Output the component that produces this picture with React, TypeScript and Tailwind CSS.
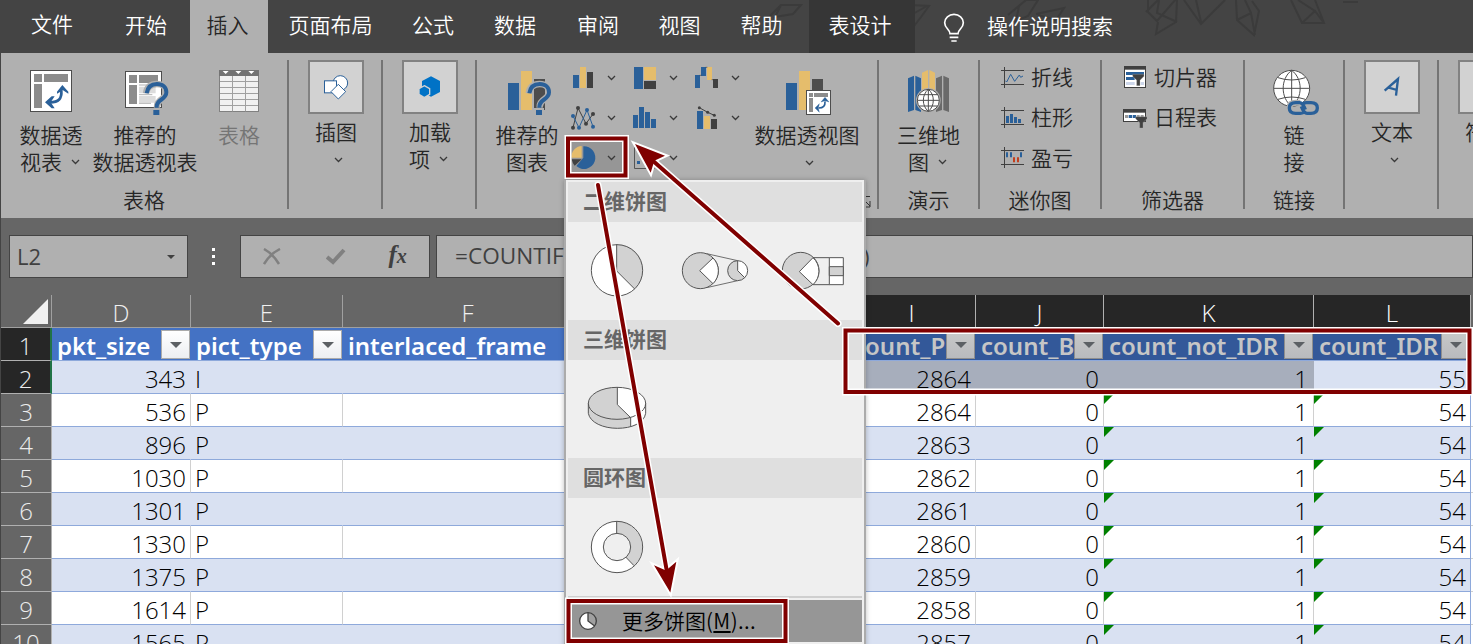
import type { ReactNode } from "react";

const BLUE = "#2a6099";
const GOLD = "#e5bd6c";
const DARK = "#4d4d4d";

function Icon({ box, children, className = "" }: { box: [number, number, number, number]; children: ReactNode; className?: string }) {
  return (
    <svg
      viewBox={box.join(" ")}
      width={box[2] / 3}
      height={box[3] / 3}
      className={`block shrink-0 overflow-visible ${className}`}
      fill="none"
    >
      {children}
    </svg>
  );
}

function Chevron({ className = "" }: { className?: string }) {
  return (
    <svg viewBox="0 0 9 6" width="9" height="6" fill="none" className={`block shrink-0 ${className}`}>
      <path d="M1 1l3.5 3.5L8 1" stroke="#3a3a3a" strokeWidth="1.3" />
    </svg>
  );
}

/* ---------- large ribbon icons ---------- */

const PivotIcon = () => (
  <Icon box={[90, 210, 126, 126]}>
    <rect x="91.5" y="211.5" width="123" height="123" fill="#fff" stroke={DARK} strokeWidth="3" />
    <path d="M102 222h24v24h-24zM132 222h72v24h-72zM102 252h24v72h-24z" fill="#8c8c8c" />
    <path d="M184 272C186 296 176 307 150 307" stroke={BLUE} strokeWidth="8" />
    <path d="M187 255l18 20v6l-16-10-18 10v-6zM135 307l20-18h9l-12 18 12 18h-9z" fill={BLUE} />
  </Icon>
);

const QuestionMark = () => (
  <>
    <path d="M441 280C444 259 458 252 474 252C491 252 502 262 502 277C502 300 474 294 474 320V323" stroke="#b0b0b0" strokeWidth="19" />
    <path d="M443 280C446 259 458 252 474 252C491 252 502 262 502 277C502 300 473 297 473 320V323" stroke={BLUE} strokeWidth="12" />
    <rect x="463" y="330" width="18" height="15" fill={BLUE} />
  </>
);

const RecommendedPivotIcon = () => (
  <Icon box={[378, 213, 130, 132]}>
    <rect x="379.500" y="214.500" width="108" height="108" fill="#fff" stroke={DARK} strokeWidth="3" />
    <path d="M390 225h24v24h-24zM420 225h57v24h-57zM390 255h24v57h-24z" fill="#8c8c8c" />
    <path d="M420 260h50v20h-50zM420 288h50v20h-50z" fill="#dcdcdc" />
    <path d="M420 255h25M420 284h40M420 310h36" stroke="#8c8c8c" strokeWidth="2" />
    <QuestionMark />
  </Icon>
);

const TableIcon = () => (
  <Icon box={[657, 210, 120, 126]}>
    <rect x="658.5" y="211.5" width="117" height="123" fill="#f1f1f1" stroke="#808080" strokeWidth="3" />
    <rect x="657" y="210" width="120" height="18" fill="#737373" />
    <path d="M697.5 228v106M736.5 228v106M660 244.500h114M660 262.500h114M660 280.500h114M660 298.500h114M660 316.500h114" stroke="#a0a0a0" strokeWidth="3" />
    <path d="M668 213h18l-9 9zM706 213h18l-9 9zM745 213h18l-9 9z" fill="#fff" />
  </Icon>
);

const ShapesIcon = () => (
  <Icon box={[972, 224, 74, 74]}>
    <circle cx="1021" cy="248" r="22" fill="#fff" stroke={BLUE} strokeWidth="3" />
    <rect x="973.5" y="241.500" width="36" height="36" fill="#fff" stroke={BLUE} strokeWidth="3" />
    <path d="M1015 252l22 22-22 22-22-22z" fill="#fff" stroke={BLUE} strokeWidth="3" />
  </Icon>
);

const AddinIcon = () => (
  <Icon box={[147, 230, 64, 64]}>
    <path d="M183 231l27 14v33l-27 14-27-14v-33z" fill="#0072c6" />
    <path d="M163 259l16 9v17l-16 10-16-10v-17z" fill="#0072c6" stroke="#d2d2d2" strokeWidth="4" />
  </Icon>
);

const RecommendedChartIcon = () => (
  <Icon box={[414, 213, 129, 132]}>
    <rect x="414" y="249" width="33" height="81" fill={BLUE} />
    <rect x="453" y="213" width="33" height="117" fill={GOLD} />
    <rect x="492" y="237" width="33" height="93" fill={DARK} />
    <g transform="translate(35 0)">
      <path d="M441 280C444 259 458 252 474 252C491 252 502 262 502 277C502 300 474 294 474 320V323" stroke="#b0b0b0" strokeWidth="19" />
      <rect x="457" y="324" width="30" height="22" fill="#b0b0b0" />
      <path d="M443 280C446 259 458 252 474 252C491 252 502 262 502 277C502 300 473 297 473 320V323" stroke={BLUE} strokeWidth="12" />
      <rect x="463" y="330" width="18" height="15" fill={BLUE} />
    </g>
  </Icon>
);

const PivotChartIcon = () => (
  <Icon box={[138, 213, 135, 132]}>
    <rect x="138" y="249" width="33" height="81" fill={BLUE} />
    <rect x="177" y="213" width="33" height="117" fill={GOLD} />
    <rect x="216" y="237" width="33" height="60" fill={DARK} />
    <rect x="199.500" y="271.500" width="72" height="72" fill="#fff" stroke={DARK} strokeWidth="3" />
    <path d="M207 279h12v12h-12zM222 279h42v12h-42zM207 294h12v42h-12z" fill="#8c8c8c" />
    <path d="M255 304C256 318 250 324 236 324" stroke={BLUE} strokeWidth="5" />
    <path d="M255 292l12 14-12-4-12 4zM225 324l13-13-3 13 3 13z" fill={BLUE} stroke={BLUE} />
  </Icon>
);

const Map3DIcon = () => (
  <Icon box={[504, 210, 123, 126]}>
    <path d="M504 235l18-8v103l-18 6zM526 227l17 8v101l-17-6z" fill={BLUE} />
    <path d="M546 218l18-8v104l-18 6zM568 210l17 8v101l-17-6z" fill={GOLD} />
    <path d="M588 235l18-8v103l-18 6zM610 227l17 8v101l-17-6z" fill="#6a6a6a" />
    <circle cx="565" cy="301" r="37" fill="#b0b0b0" />
    <circle cx="565" cy="301" r="33" fill="#fff" stroke={DARK} strokeWidth="3" />
    <path d="M565 268v66M532 301h66M538 284h54M538 318h54M565 268C545 284 545 318 565 334M565 268C585 284 585 318 565 334" stroke={DARK} strokeWidth="3" />
  </Icon>
);

const LinkIcon = () => (
  <Icon box={[519, 210, 138, 135]}>
    <circle cx="575" cy="265" r="54" fill="#fff" stroke={DARK} strokeWidth="3" />
    <path d="M575 211v108M521 265h108M534 233Q575 247 616 233M534 298Q575 284 616 298M575 211C541 236 541 294 575 319M575 211C609 236 609 294 575 319" stroke={DARK} strokeWidth="3" />
    <path d="M601 308h-14q-19 0-19 16t19 16h14q10 0 15-7M619 308h14q19 0 19 16t-19 16h-14" stroke="#b0b0b0" strokeWidth="18" />
    <path d="M616 329q-8-21-17-21h-12q-19 0-19 16t19 16h14q8 0 14-6M604 319q8 21 17 21h12q19 0 19-16t-19-16h-14q-8 0-14 6" stroke={BLUE} strokeWidth="10" />
  </Icon>
);

/* ---------- small ribbon icons ---------- */

const smallCharts: ReactNode[] = [
  <Icon key="column" box={[603, 195, 66, 69]}>
    <path d="M609 222h18v39h-18z" fill={BLUE} />
    <path d="M630 198h18v63h-18z" fill={GOLD} />
    <path d="M651 213h18v48h-18z" fill="#404040" />
  </Icon>,
  <Icon key="tree" box={[789, 195, 66, 69]}>
    <path d="M792 198h27v66h-27z" fill={BLUE} />
    <path d="M822 198h36v39h-36z" fill={GOLD} />
    <path d="M822 240h36v24h-36z" fill="#404040" />
  </Icon>,
  <Icon key="waterfall" box={[975, 195, 66, 69]}>
    <path d="M975 222h15v39h-15zM993 198h15v27h-15z" fill={BLUE} />
    <path d="M1011 198h15v39h-15z" fill={GOLD} />
    <path d="M1029 234h15v27h-15z" fill="#404040" />
    <path d="M989 223h5M1007 199h5M1025 236h5" stroke="#404040" strokeWidth="2" />
  </Icon>,
  <Icon key="line" box={[603, 315, 66, 69]}>
    <path d="M609 380L624 321L648 368L669 339" stroke="#404040" strokeWidth="3" />
    <path d="M609 345L627 380L651 327L669 377" stroke={BLUE} strokeWidth="3" />
    <g fill="#404040"><circle cx="609" cy="380" r="6" /><circle cx="624" cy="321" r="6" /><circle cx="648" cy="368" r="6" /><circle cx="669" cy="339" r="6" /></g>
    <g fill={BLUE}><circle cx="609" cy="345" r="6" /><circle cx="627" cy="380" r="6" /><circle cx="651" cy="327" r="6" /><circle cx="669" cy="377" r="6" /></g>
  </Icon>,
  <Icon key="hist" box={[789, 315, 66, 69]}>
    <path d="M789 342h15v39h-15zM807 318h15v63h-15zM825 333h15v48h-15zM843 354h15v27h-15z" fill={BLUE} />
  </Icon>,
  <Icon key="combo" box={[975, 315, 66, 69]}>
    <path d="M981 330h18v54h-18z" fill={BLUE} />
    <path d="M1002 345h18v39h-18z" fill={GOLD} />
    <path d="M1023 354h18v30h-18z" fill="#404040" />
    <path d="M988 320L1013 334L1033 343" stroke="#404040" strokeWidth="3" />
    <g fill="#404040"><circle cx="988" cy="320" r="4.500" /><circle cx="1013" cy="334" r="4.500" /><circle cx="1033" cy="343" r="4.500" /></g>
  </Icon>,
  <Icon key="pie" box={[603, 435, 66, 69]}>
    <path d="M640 470V436A34 34 0 1 1 619 495z" fill={BLUE} />
    <path d="M635 470H604A33 33 0 0 1 635 435z" fill={GOLD} />
    <path d="M635 475H605Q607 486 614 494z" fill="#404040" />
  </Icon>,
  <Icon key="scatter" box={[789, 435, 66, 69]}>
    <path d="M793.500 438v64.500h60" stroke="#555" strokeWidth="3" />
    <path d="M801 480h9v9h-9zM821 470h9v9h-9z" fill={BLUE} />
  </Icon>,
];

const sparkFrame = (y: number) => <path d={`M783 ${y + 10.5}h69M783 ${y + 52.5}h69M793.5 ${y}v63`} stroke="#404040" strokeWidth="3" />;

const SparkLine = () => (
  <Icon box={[783, 198, 69, 63]}>
    {sparkFrame(198)}
    <path d="M796 239l4 4 12-23 12 21 14-19 4 7 7-4" stroke={BLUE} strokeWidth="3" />
  </Icon>
);
const SparkColumn = () => (
  <Icon box={[783, 318, 69, 63]}>
    {sparkFrame(318)}
    <path d="M798 345h9v21h-9zM810 339h9v27h-9zM822 348h9v18h-9zM834 354h9v12h-9z" fill={BLUE} />
  </Icon>
);
const SparkWinLoss = () => (
  <Icon box={[783, 440, 69, 63]}>
    {sparkFrame(440)}
    <path d="M798 456h6v15h-6zM810 456h6v15h-6zM840 456h6v15h-6z" fill={BLUE} />
    <path d="M819 471h6v15h-6zM831 471h6v15h-6z" fill="#c43e1c" />
  </Icon>
);

const Funnel = ({ x, y }: { x: number; y: number }) => (
  <path transform={`translate(${x} ${y})`} d="M0 0h34v6L22 18v16h-10V18L0 6z" fill="#404040" stroke="#b0b0b0" strokeWidth="1" />
);
const SlicerIcon = () => (
  <Icon box={[72, 198, 72, 66]}>
    <rect x="73.500" y="199.500" width="63" height="63" fill="#fff" stroke="#404040" strokeWidth="3" />
    <path d="M72 198h66v11H72z" fill="#404040" />
    <path d="M78 216h54v9H78zM78 231h26v9H78z" fill={BLUE} />
    <path d="M78 246h26v9H78zM122 246h10v9h-10z" fill="#ccd6ea" />
    <Funnel x={98} y={223} />
  </Icon>
);
const TimelineIcon = () => (
  <Icon box={[72, 321, 72, 66]}>
    <rect x="70.500" y="331.500" width="66" height="36" fill="#fff" stroke="#404040" strokeWidth="3" />
    <path d="M69 330h69v11H69z" fill="#404040" />
    <path d="M86 348h10v9H86zM98 348h10v9H98z" fill={BLUE} />
    <path d="M75 348h9v9h-9zM110 348h9v9h-9zM122 348h9v9h-9z" fill="#999" />
    <Funnel x={107} y={353} />
  </Icon>
);

/* ---------- ribbon building blocks ---------- */

function Group({ width, label, children }: { width: string; label?: string; children: ReactNode }) {
  return (
    <div className={`flex h-full shrink-0 flex-col ${width}`}>
      <div className="flex h-[133px]">{children}</div>
      {label && <div className="text-center leading-[26px]">{label}</div>}
    </div>
  );
}

const Divider = () => <div className="mt-[7px] h-[149px] w-[2px] shrink-0 bg-[#747474]" />;

function BigButton({ width, icon, shift = "pt-[17px]", lines, muted = false, chevron }: { width: string; icon: ReactNode; shift?: string; lines: string[]; muted?: boolean; chevron?: "inline" | "below" }) {
  return (
    <div className={`flex shrink-0 flex-col items-center ${width} ${muted ? "text-[#757575]" : ""}`}>
      <div className={`h-[68px] ${shift}`}>{icon}</div>
      {lines.map((line, i) => (
        <div key={line} className="flex h-[27px] items-center whitespace-nowrap leading-[27px]">
          {line}
          {chevron === "inline" && i === lines.length - 1 && <Chevron className="mt-px mr-[2px] ml-[9px]" />}
        </div>
      ))}
      {chevron === "below" && <Chevron className="mt-[12px] ml-[5px]" />}
    </div>
  );
}

function TileButton({ icon, lines, inline = false, margin = "ml-[19px]" }: { icon: ReactNode; lines: string[]; inline?: boolean; margin?: string }) {
  return (
    <div className={`mt-[7px] flex w-[56px] shrink-0 flex-col items-center ${margin}`}>
      <div className="mb-[4px] flex h-[54px] w-[56px] items-center justify-center border-2 border-[#828282] bg-[#d2d2d2]">{icon}</div>
      {lines.map((line, i) => (
        <div key={line} className="flex h-[27px] items-center whitespace-nowrap leading-[27px]">
          {line}
          {inline && i === lines.length - 1 && <Chevron className="mr-[3px] ml-[9px]" />}
        </div>
      ))}
      {!inline && <Chevron className="mt-[12px] ml-[5px]" />}
    </div>
  );
}

/* ---------- worksheet ---------- */

const sheet = [
  ["343", "I", "2864", "0", "1", "55"],
  ["536", "P", "2864", "0", "1", "54"],
  ["896", "P", "2863", "0", "1", "54"],
  ["1030", "P", "2862", "0", "1", "54"],
  ["1301", "P", "2861", "0", "1", "54"],
  ["1330", "P", "2860", "0", "1", "54"],
  ["1375", "P", "2859", "0", "1", "54"],
  ["1614", "P", "2858", "0", "1", "54"],
  ["1565", "P", "2857", "0", "1", "54"],
];

const columns = [
  { name: "D", width: "w-[139px]", selected: false },
  { name: "E", width: "w-[152px]", selected: false },
  { name: "F", width: "w-[250px]", selected: false },
  { name: "", width: "w-[255px]", selected: false },
  { name: "I", width: "w-[128px]", selected: true },
  { name: "J", width: "w-[128px]", selected: true },
  { name: "K", width: "w-[210px]", selected: true },
  { name: "L", width: "w-[157px]", selected: true },
];

const headers = ["pkt_size", "pict_type", "interlaced_frame", "", "count_P", "count_B", "count_not_IDR", "count_IDR"];

function FilterButton({ dim }: { dim: boolean }) {
  return (
    <div className={`mt-px mr-px flex h-[29px] w-[29px] shrink-0 items-center justify-center border ${dim ? "border-[#8e8e8e] bg-linear-to-b from-[#c8c8c8] to-[#b9bbbe]" : "border-[#ababab] bg-linear-to-b from-white to-[#eceef2]"}`}>
      <svg viewBox="0 0 12 6" width="12" height="6"><path d="M0 0h12L6 6z" fill="#5c6064" /></svg>
    </div>
  );
}

const SheetEdge = () => <div className="h-[33px] w-[2px] shrink-0 border-b border-[#d0d0d0] bg-white" />;

function SheetRow({ values, index }: { values: string[]; index: number }) {
  const banded = index % 2 === 0;
  const cells = [values[0], values[1], "", "", values[2], values[3], values[4], values[5]];
  return (
    <div className="flex h-[33px] shrink-0">
      <RowNumber n={index + 2} />
      {cells.map((value, c) => {
        const selected = index === 0 && c > 3 && c < 7;
        const bg = selected ? "bg-[#a7aebc]" : banded ? "bg-[#d9e1f2]" : "bg-white";
        const side = c === 7 ? "border-r-[#8ea9db]" : banded ? "border-r-transparent" : "border-r-[#d0d0d0]";
        return (
          <div key={c} className={`relative h-[33px] shrink-0 border-r border-b border-b-[#8ea9db] px-[4px] leading-[35px] ${columns[c].width} ${bg} ${side} ${c === 1 ? "text-left" : "text-right"} ${c === 6 ? "pr-[5px]" : ""}`}>
            {value}
            {index > 0 && c > 5 && (
              <svg viewBox="0 0 10 10" width="10" height="10" className="absolute top-0 left-0"><path d="M0 0h10L0 10z" fill="#008000" /></svg>
            )}
          </div>
        );
      })}
      <SheetEdge />
    </div>
  );
}

function RowNumber({ n }: { n: number }) {
  const active = n < 3;
  return (
    <div className={`h-[33px] w-[51px] shrink-0 border-b border-[#b0b0b0] text-center leading-[35px] text-[#ececec] ${active ? "border-r-2 border-r-[#217346] bg-[#262626]" : "border-r bg-[#666]"}`}>{n}</div>
  );
}

/* ---------- drop-down gallery ---------- */

const ink = { stroke: "#555", strokeWidth: 3 };

const Pie2D = () => (
  <Icon box={[663, 87, 156, 158]} className="-mt-[2px] ml-[23px]">
    <circle cx="741" cy="166" r="77" fill="#fff" />
    <path d="M740 88A77 77 0 0 1 794 222L740 168z" fill="#d2d2d2" />
    <circle cx="741" cy="166" r="77" {...ink} />
    <path d="M740 88v80l54 54" {...ink} />
  </Icon>
);
const PieOfPie = () => (
  <Icon box={[936, 110, 198, 112]} className="-mt-px ml-[39px]">
    <path d="M1010 115L1103 136M1010 217L1103 196" {...ink} strokeWidth="2.500" />
    <circle cx="991" cy="166" r="54" fill="#d2d2d2" {...ink} />
    <path d="M1029 128A54 54 0 0 1 1029 205L989 166z" fill="#fff" {...ink} />
    <circle cx="1103" cy="166" r="30" fill="#fff" />
    <path d="M1103 136A30 30 0 1 0 1124 187L1103 166z" fill="#d2d2d2" />
    <circle cx="1103" cy="166" r="30" {...ink} />
    <path d="M1103 136v30l21 21" {...ink} />
  </Icon>
);
const BarOfPie = () => (
  <Icon box={[127, 110, 185, 112]} className="-mt-px ml-[34px]">
    <circle cx="183" cy="166" r="55" fill="#d2d2d2" {...ink} />
    <path d="M220 127A55 55 0 0 1 220 208L179 169z" fill="#fff" {...ink} />
    <path d="M220 127h50M218 208h52" {...ink} />
    <path d="M269 127h42v81h-42z" fill="#fff" {...ink} />
    <path d="M269 154h42v27h-42z" fill="#d2d2d2" {...ink} />
  </Icon>
);
const Pie3D = () => (
  <Icon box={[654, 516, 174, 125]} className="-mt-[2px] ml-[20px]">
    <path d="M655 568v27C660 623 700 640 742 640C785 640 822 625 827 595V568z" fill="#d2d2d2" />
    <path d="M782 608v26Q826 618 827 590V568z" fill="#fff" />
    <ellipse cx="741" cy="565" rx="86" ry="48" fill="#d2d2d2" />
    <path d="M742 517C795 517 827 540 827 567C827 587 810 600 782 608L742 569z" fill="#fff" />
    <ellipse cx="741" cy="565" rx="86" ry="48" {...ink} />
    <path d="M742 517v52l40 39v26M655 565v30C660 623 700 640 742 640C785 640 822 625 827 595V565" {...ink} />
  </Icon>
);
const Doughnut = () => (
  <Icon box={[153, 303, 156, 156]} className="ml-[23px]">
    <circle cx="231" cy="381" r="77" fill="#fff" />
    <path d="M230 304A77 77 0 0 1 282 437L230 381z" fill="#d2d2d2" />
    <circle cx="231" cy="381" r="41" fill="#efefef" {...ink} />
    <circle cx="231" cy="381" r="77" {...ink} />
    <path d="M230 304v36M257 411l25 26" {...ink} />
  </Icon>
);

const SectionTitle = ({ children }: { children: ReactNode }) => (
  <div className="mx-[2px] h-[40px] shrink-0 bg-[#dfdfdf] pl-[15px] font-bold leading-[37px] text-[#666]">{children}</div>
);

function Gallery() {
  return (
    <div className="absolute top-[180px] left-[564px] flex h-[470px] w-[302px] flex-col border-x-2 border-[#ababab] bg-[#efefef] pt-[2px] shadow-[0_0_5px_rgba(0,0,0,0.25)]">
      <SectionTitle>二维饼图</SectionTitle>
      <div className="flex h-[98px] shrink-0 items-center"><div className="flex items-center pl-[2px]"><Pie2D /><PieOfPie /><BarOfPie /></div></div>
      <SectionTitle>三维饼图</SectionTitle>
      <div className="flex h-[98px] shrink-0 items-center pl-[2px]"><Pie3D /></div>
      <SectionTitle>圆环图</SectionTitle>
      <div className="flex h-[98px] shrink-0 items-center pl-[2px]"><Doughnut /></div>
      <div className="mx-[2px] mb-[2px] h-[2px] shrink-0 bg-[#cfcfcf]" />
      <div className="mx-[2px] flex h-[42px] shrink-0 items-center bg-[#969696] pl-[11px] text-black">
        <Icon box={[117, 573, 54, 54]}>
          <circle cx="144" cy="600" r="25" fill="#fff" />
          <path d="M144 575A25 25 0 0 1 164 615L144 600z" fill="#a0a0a0" />
          <circle cx="144" cy="600" r="25" stroke="#404040" strokeWidth="4" />
          <path d="M144 575v25l20 15" stroke="#404040" strokeWidth="4" />
        </Icon>
        <span className="ml-[25px] whitespace-nowrap">更多饼图<span className="tracking-[0.4px]">(<span className="underline underline-offset-2">M</span>)...</span></span>
      </div>
    </div>
  );
}

/* ---------- callout marks drawn over the window ---------- */

function Callouts() {
  const shapes = (
    <>
      <rect x="568" y="138.500" width="57.500" height="37" />
      <rect x="845.500" y="330.500" width="624" height="61.500" />
      <rect x="568.500" y="601" width="217" height="40" />
      <path d="M598 185L667 572M838 323.500L652 160" strokeLinecap="round" />
    </>
  );
  const heads = "M670.300 592.500L654 565.300L666 570.500L676.300 561.700zM635 144L665 155.700L654.300 160.700L650.700 172.700z";
  return (
    <svg viewBox="0 0 1473 644" className="pointer-events-none absolute inset-0 h-[644px] w-[1473px]" fill="none">
      <g stroke="#fff" strokeWidth="7">{shapes}</g>
      <path d={heads} stroke="#fff" strokeWidth="4" fill="#fff" />
      <g stroke="#800000" strokeWidth="4">{shapes}</g>
      <path d={heads} fill="#800000" />
    </svg>
  );
}

const tabs = [
  { name: "文件", style: "w-[104px] pb-[6px]" },
  { name: "开始", style: "w-[84px] pb-[3px]" },
  { name: "插入", style: "ml-[2px] w-[78px] bg-[#b0b0b0] pr-[3px] pb-[3px] text-[#262626]" },
  { name: "页面布局", style: "w-[125px] pb-[3px]" },
  { name: "公式", style: "w-[82px] pr-[2px] pb-[3px]" },
  { name: "数据", style: "w-[82px] pr-[2px] pb-[3px]" },
  { name: "审阅", style: "w-[82px] pb-[3px]" },
  { name: "视图", style: "w-[81px] pb-[3px]" },
  { name: "帮助", style: "w-[83px] pb-[3px]" },
  { name: "表设计", style: "ml-[6px] w-[106px] bg-[#363636] pr-[4px] pb-[3px]" },
];

export default function App() {
  return (
    <div className="relative flex h-[644px] w-[1473px] flex-col overflow-hidden bg-[#666] font-['Noto_Sans_CJK_SC',sans-serif] text-[21px] font-[350] text-[#262626]">
      <div className="relative flex h-[53px] shrink-0 bg-[#444] text-white">
        <svg viewBox="0 0 733 53" className="absolute top-0 right-0 h-[53px] w-[733px]" fill="none" stroke="#3b3b3b" strokeWidth="2">
          <path d="M30 16l11-11 20 0-8 9-18 3 6-12M171 5l18 1-8 11-10 13M187 6l-16 9M268 15l18-15 12 0-10 16-12 5 3-15M296 14l28-6-8 12-18-5M406 12l12-12M418 22l-2 12 20-12 1-22M419 0l-2 13 20 9M408 0l0 12 9 9 19-22M408 0M444 0l17 24 24-24M456 0l5 22M496 0l1 20 17 15 5-24-7-10M497 20l14-7 4 22M511 13l-6-13M551 0l11 23h22l-9-23M562 23l13-12 9 12M575 11l-17-11M603 2h15" />
        </svg>
        {tabs.map((tab) => (
          <div key={tab.name} className={`relative flex shrink-0 items-center justify-center ${tab.style}`}>{tab.name}</div>
        ))}
        <div className="relative flex items-center pl-[29px]">
          <Icon box={[612, 42, 60, 84]} className="mt-[3px]">
            <path d="M630 101C630 88 614 85 614 68A28 25 0 0 1 670 68C670 85 654 88 654 101z" stroke="#fff" strokeWidth="5" />
            <path d="M629 112h26M634 123h16" stroke="#fff" strokeWidth="5" />
          </Icon>
          <span className="ml-[23px] pb-px">操作说明搜索</span>
        </div>
      </div>

      <div className="flex h-[165px] shrink-0 border-l border-[#444] bg-[#b0b0b0]">
        <Group width="w-[286px]" label="表格">
          <BigButton width="ml-[3px] w-[94px]" icon={<PivotIcon />} lines={["数据透", "视表"]} chevron="inline" />
          <BigButton width="w-[94px]" icon={<RecommendedPivotIcon />} shift="pt-[18px] pl-[4px]" lines={["推荐的", "数据透视表"]} />
          <BigButton width="w-[94px]" icon={<TableIcon />} lines={["表格"]} muted />
        </Group>
        <Divider />
        <Group width="w-[92px]"><TileButton icon={<ShapesIcon />} lines={["插图"]} /></Group>
        <Divider />
        <Group width="w-[92px]"><TileButton icon={<AddinIcon />} lines={["加载", "项"]} inline /></Group>
        <Divider />
        <Group width="w-[400px]">
          <BigButton width="ml-[10px] w-[80px]" icon={<RecommendedChartIcon />} shift="pt-[18px] pl-[5px]" lines={["推荐的", "图表"]} />
          <div className="mt-[4px] grid h-[120px] w-[186px] shrink-0 grid-cols-3 grid-rows-3">
            {smallCharts.map((chart, i) => (
              <div key={i} className={`flex items-center pl-[4px] ${i === 6 ? "my-[2px] bg-[#969696]" : ""}`}>{chart}<Chevron className="mt-[2px] ml-[14px]" /></div>
            ))}
          </div>
          <BigButton width="w-[108px]" icon={<PivotChartIcon />} shift="pt-[18px] pl-[2px]" lines={["数据透视图"]} chevron="below" />
          <svg viewBox="0 0 10 12" width="10" height="12" className="mt-[143px] shrink-0" fill="none" stroke="#333"><path d="M0 .5h9M3 4l6 6M9 5v6H3" /></svg>
        </Group>
        <Divider />
        <Group width="w-[99px]" label="演示">
          <BigButton width="w-[99px]" icon={<Map3DIcon />} lines={["三维地", "图"]} chevron="inline" />
        </Group>
        <Divider />
        <Group width="w-[120px]" label="迷你图">
          <div className="flex flex-col pt-[4px] pl-[21px]">
            <div className="flex h-[40px] items-center gap-[7px]"><SparkLine />折线</div>
            <div className="flex h-[40px] items-center gap-[7px]"><SparkColumn />柱形</div>
            <div className="flex h-[41px] items-center gap-[7px]"><SparkWinLoss />盈亏</div>
          </div>
        </Group>
        <Divider />
        <Group width="w-[141px]" label="筛选器">
          <div className="flex flex-col pt-[4px] pl-[22px]">
            <div className="flex h-[40px] items-center gap-[6px]"><SlicerIcon />切片器</div>
            <div className="flex h-[40px] items-center gap-[6px]"><TimelineIcon />日程表</div>
          </div>
        </Group>
        <Divider />
        <Group width="w-[98px]" label="链接">
          <BigButton width="w-[98px]" icon={<LinkIcon />} shift="pt-[17px] pl-[4px]" lines={["链", "接"]} />
        </Group>
        <Divider />
        <Group width="w-[92px]">
          <TileButton icon={<Icon box={[853, 234, 46, 54]}><path d="M855 272L895 237L889 287M867 263l25 7" stroke={BLUE} strokeWidth="7" /></Icon>} lines={["文本"]} />
        </Group>
        <Divider />
        <Group width="w-[92px]"><TileButton icon={<span />} lines={["符号"]} /></Group>
      </div>

      <div className="flex h-[77px] shrink-0 items-start border-l border-[#444] pt-[17px] pl-[8px] font-['Open_Sans',sans-serif] text-[22px] font-normal text-[#404040]">
        <div className="flex h-[43px] w-[179px] items-center justify-between border border-[#444] bg-[#b0b0b0] pr-[12px] pl-[7px]">
          L2
          <svg viewBox="0 0 8 4" width="8" height="4"><path d="M0 0h8L4 4z" fill="#404040" /></svg>
        </div>
        <div className="mt-[13px] ml-[24px] flex flex-col gap-[4px]">
          <i className="h-[3px] w-[3px] bg-white" /><i className="h-[3px] w-[3px] bg-white" /><i className="h-[3px] w-[3px] bg-white" />
        </div>
        <div className="ml-[25px] flex h-[43px] w-[191px] items-center border border-[#444] bg-[#b0b0b0] pl-[22px]">
          <svg viewBox="0 0 18 17" width="18" height="17" fill="none" stroke="#808080" strokeWidth="2.500"><path d="M1 1q9 5 15 15M17 1Q7 6 1 16" /></svg>
          <svg viewBox="0 0 20 17" width="20" height="17" fill="none" stroke="#808080" strokeWidth="4" className="ml-[45px]"><path d="M1 9l6 5L18 2" /></svg>
          <span className="ml-[43px] pb-[5px] font-['Liberation_Serif',serif] text-[25px] font-bold italic leading-none">f<span className="text-[20px]">x</span></span>
        </div>
        <div className="ml-[6px] flex h-[43px] w-[1040px] items-center border border-[#444] bg-[#b0b0b0] pb-px pl-[18px]">
          <span className="w-[408px] overflow-hidden text-[22.600px] whitespace-nowrap">=COUNTIF</span><span>)</span>
        </div>
      </div>

      <div className="flex grow flex-col border-l border-[#444] font-['Open_Sans',sans-serif] text-[24px] text-black">
        <div className="flex h-[33px] shrink-0 text-[#f0f0f0]">
          <div className="flex h-[33px] w-[51px] shrink-0 items-end justify-end border-r border-b border-[#a0a0a0] pr-[3px] pb-[3px]">
            <svg viewBox="0 0 25 25" width="25" height="25"><path d="M25 0v25H0z" fill="#f0f0f0" /></svg>
          </div>
          {columns.map((col, i) => (
            <div key={i} className={`h-[33px] shrink-0 border-r border-b text-center leading-[35px] ${col.width} ${col.selected ? "border-r-[#b0b0b0] border-b-[#217346] bg-[#262626] text-white" : "border-[#a0a0a0]"}`}>{col.name}</div>
          ))}
        </div>
        <div className="flex h-[33px] shrink-0">
          <RowNumber n={1} />
          {headers.map((h, i) => (
            <div key={i} className={`flex h-[33px] shrink-0 items-center justify-between overflow-hidden border-b border-[#8ea9db] pl-[5px] font-['Noto_Sans',sans-serif] text-[24px] font-semibold ${columns[i].width} ${i > 3 ? "bg-[#335899] text-[#c6c6c6]" : "bg-[#4472c4] text-white"}`}>
              <span className="pt-[3px] leading-[30px] whitespace-nowrap">{h}</span>
              {i !== 2 && i !== 3 && <FilterButton dim={i > 3} />}
            </div>
          ))}
          <SheetEdge />
        </div>
        {sheet.map((values, i) => <SheetRow key={i} values={values} index={i} />)}
      </div>

      <Gallery />
      <Callouts />
    </div>
  );
}
